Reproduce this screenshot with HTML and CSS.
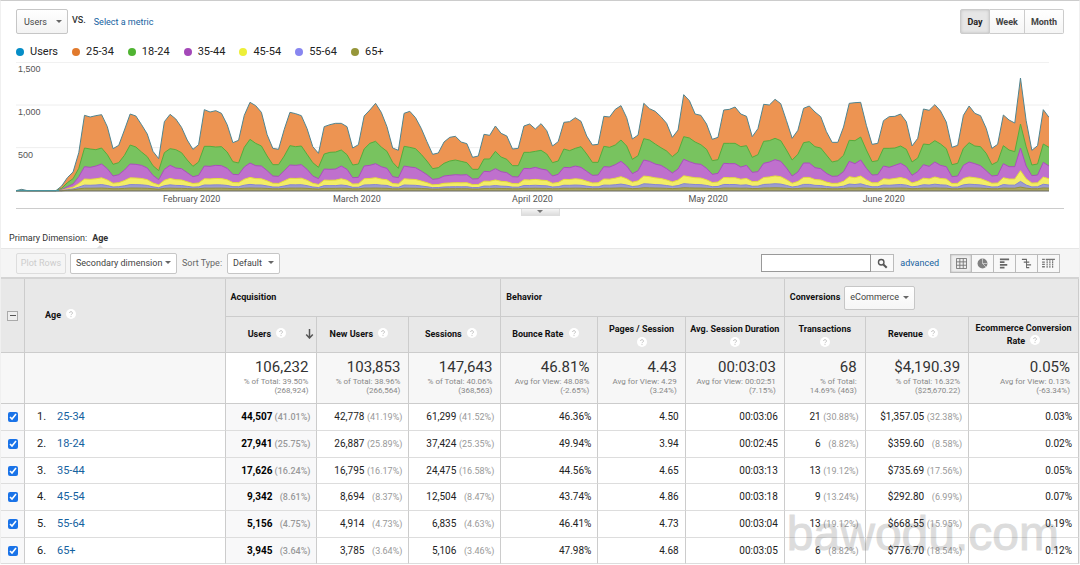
FILE: index.html
```html
<!DOCTYPE html>
<html lang="en">
<head>
<meta charset="utf-8">
<title>Age - Analytics</title>
<link rel="stylesheet" href="styles.css">
</head>
<body>
<svg class="defs" aria-hidden="true">
  <symbol id="help" viewBox="0 0 10 10"><circle cx="5" cy="5" r="5" fill="#fff"/><path d="M3.6 4a1.4 1.4 0 1 1 2.1 1.2Q5 5.600 5 6.200M5 7.200v.9" fill="none" stroke="#bbb" stroke-width=".9"/></symbol>
</svg>
<main class="report">
  <section class="graph">
    <div class="graph-bar">
      <span class="pick pick-metric"><select aria-label="Metric"><option>Users</option></select></span>
      <span class="versus">VS.</span>
      <a class="metric-link" href="#">Select a metric</a>
      <div class="periods">
        <button class="period active" type="button">Day</button><button class="period" type="button">Week</button><button class="period" type="button">Month</button>
      </div>
    </div>
    <ul class="legend">
      <li class="key users">Users</li><li class="key a25">25-34</li><li class="key a18">18-24</li><li class="key a35">35-44</li><li class="key a45">45-54</li><li class="key a55">55-64</li><li class="key a65">65+</li>
    </ul>
    <div class="chart">
      <svg class="plot" id="plot" viewBox="51 186 3093 390" preserveAspectRatio="none" role="img" aria-label="Users by age"></svg>
      <div class="scale"><span>1,500</span><span>1,000</span><span>500</span></div>
    </div>
    <div class="months"><span class="feb">February 2020</span><span class="mar">March 2020</span><span class="apr">April 2020</span><span class="may">May 2020</span><span class="jun">June 2020</span></div>
    <div class="divider"><button class="handle" type="button" aria-label="Toggle annotations"></button></div>
  </section>

  <div class="dimension"><span>Primary Dimension:</span><b>Age</b></div>

  <div class="toolbar">
    <button class="plot-rows" type="button" disabled>Plot Rows</button>
    <span class="pick pick-second"><select aria-label="Secondary dimension"><option>Secondary dimension</option></select></span>
    <label class="sort-label" for="sort">Sort Type:</label>
    <span class="pick pick-sort"><select id="sort"><option>Default</option></select></span>
    <form class="search">
      <input class="search-box" type="text" aria-label="Search">
      <button class="search-go" type="button" aria-label="Search"><svg viewBox="0 0 12 12"><circle cx="4.600" cy="4.600" r="3" fill="none" stroke="#555" stroke-width="1.500"/><path d="M7 7l3.600 3.600" stroke="#555" stroke-width="2.200"/></svg></button>
    </form>
    <a class="advanced" href="#">advanced</a>
    <div class="views">
      <button class="view active" type="button" aria-label="Data"><svg viewBox="0 0 12 12"><path d="M.5.5h11v11H.5zM.5 4.200h11M.5 7.900h11M4.200.5v11M7.900.5v11" fill="none" stroke="#777"/></svg></button><button class="view" type="button" aria-label="Percentage"><svg viewBox="0 0 12 12"><circle cx="6" cy="6" r="5.400" fill="#808080"/><path d="M6 .6V6h5.400M6 6l3.800 3.800" fill="none" stroke="#ddd" stroke-width=".8"/></svg></button><button class="view" type="button" aria-label="Performance"><svg viewBox="0 0 12 12"><path d="M1 1.500h10M1 4.500h5M1 7.500h8M1 10.500h5" stroke="#666" stroke-width="2"/></svg></button><button class="view" type="button" aria-label="Comparison"><svg viewBox="0 0 12 12"><path d="M1 1.500h5M3 4.500h3M6 7.500h5M6 10.500h3M6 4.500h3" stroke="#666" stroke-width="1.600"/><path d="M6 1v10" stroke="#666"/></svg></button><button class="view" type="button" aria-label="Pivot"><svg class="wide" viewBox="0 0 14 12"><path d="M0 1.500h3M4 1.500h10M0 4.500h3M0 7h3M0 9.500h3" stroke="#777" stroke-width="1.500"/><path d="M5.500 1v10M8.500 1v10M11.500 1v10" stroke="#777" stroke-width="1.300" stroke-dasharray="2 .5"/></svg></button>
    </div>
  </div>

  <div class="sheet">
  <table class="data">
    <colgroup><col class="c-check"><col class="c-name"><col class="c-users"><col class="c-users"><col class="c-users"><col class="c-bounce"><col class="c-pages"><col class="c-time"><col class="c-trans"><col class="c-rev"><col></colgroup>
    <thead>
      <tr class="groups">
        <th class="check" rowspan="2"><button class="minus" type="button" aria-label="Deselect all"></button></th>
        <th class="age" rowspan="2">Age <svg class="help"><use href="#help"/></svg></th>
        <th colspan="3">Acquisition</th>
        <th colspan="3">Behavior</th>
        <th colspan="3"><div class="conv"><label for="conv">Conversions</label><span class="pick pick-conv"><select id="conv"><option>eCommerce</option></select></span></div></th>
      </tr>
      <tr class="metrics">
        <th class="sorted">Users <svg class="help"><use href="#help"/></svg><svg class="arrow" viewBox="0 0 8 10"><path d="M4 0v9M.7 5.500L4 9l3.300-3.500" fill="none" stroke="#555" stroke-width="1.500"/></svg></th>
        <th>New Users <svg class="help"><use href="#help"/></svg></th>
        <th>Sessions <svg class="help"><use href="#help"/></svg></th>
        <th>Bounce Rate <svg class="help"><use href="#help"/></svg></th>
        <th class="tall">Pages / Session <svg class="help below"><use href="#help"/></svg></th>
        <th class="tall">Avg. Session Duration <svg class="help below"><use href="#help"/></svg></th>
        <th class="tall">Transactions <svg class="help below"><use href="#help"/></svg></th>
        <th>Revenue <svg class="help"><use href="#help"/></svg></th>
        <th class="tall">Ecommerce Conversion Rate <svg class="help"><use href="#help"/></svg></th>
      </tr>
    </thead>
    <tbody class="totals">
      <tr><td class="check"></td><td></td>
        <td class="lead"><strong>106,232</strong><small>% of Total: 39.50% (268,924)</small></td>
        <td><strong>103,853</strong><small>% of Total: 38.96% (266,564)</small></td>
        <td><strong>147,643</strong><small>% of Total: 40.06% (368,563)</small></td>
        <td><strong>46.81%</strong><small>Avg for View: 48.08% (-2.65%)</small></td>
        <td><strong>4.43</strong><small>Avg for View: 4.29 (3.24%)</small></td>
        <td><strong>00:03:03</strong><small>Avg for View: 00:02:51 (7.15%)</small></td>
        <td><strong>68</strong><small>% of Total:<br>14.69% (463)</small></td>
        <td><strong>$4,190.39</strong><small>% of Total: 16.32% ($25,670.22)</small></td>
        <td><strong>0.05%</strong><small>Avg for View: 0.13%<br>(-63.34%)</small></td></tr>
    </tbody>
    <tbody class="rows">
      <tr><td class="check"><input type="checkbox" checked aria-label="25-34"></td><td class="name"><span>1.</span><a href="#">25-34</a></td><td class="lead">44,507<i>(41.01%)</i></td><td>42,778<i>(41.19%)</i></td><td>61,299<i>(41.52%)</i></td><td>46.36%</td><td>4.50</td><td>00:03:06</td><td>21<i>(30.88%)</i></td><td>$1,357.05<i>(32.38%)</i></td><td>0.03%</td></tr>
      <tr><td class="check"><input type="checkbox" checked aria-label="18-24"></td><td class="name"><span>2.</span><a href="#">18-24</a></td><td class="lead">27,941<i>(25.75%)</i></td><td>26,887<i>(25.89%)</i></td><td>37,424<i>(25.35%)</i></td><td>49.94%</td><td>3.94</td><td>00:02:45</td><td>6<i>(8.82%)</i></td><td>$359.60<i>(8.58%)</i></td><td>0.02%</td></tr>
      <tr><td class="check"><input type="checkbox" checked aria-label="35-44"></td><td class="name"><span>3.</span><a href="#">35-44</a></td><td class="lead">17,626<i>(16.24%)</i></td><td>16,795<i>(16.17%)</i></td><td>24,475<i>(16.58%)</i></td><td>44.56%</td><td>4.65</td><td>00:03:13</td><td>13<i>(19.12%)</i></td><td>$735.69<i>(17.56%)</i></td><td>0.05%</td></tr>
      <tr><td class="check"><input type="checkbox" checked aria-label="45-54"></td><td class="name"><span>4.</span><a href="#">45-54</a></td><td class="lead">9,342<i>(8.61%)</i></td><td>8,694<i>(8.37%)</i></td><td>12,504<i>(8.47%)</i></td><td>43.74%</td><td>4.86</td><td>00:03:18</td><td>9<i>(13.24%)</i></td><td>$292.80<i>(6.99%)</i></td><td>0.07%</td></tr>
      <tr><td class="check"><input type="checkbox" checked aria-label="55-64"></td><td class="name"><span>5.</span><a href="#">55-64</a></td><td class="lead">5,156<i>(4.75%)</i></td><td>4,914<i>(4.73%)</i></td><td>6,835<i>(4.63%)</i></td><td>46.41%</td><td>4.73</td><td>00:03:04</td><td>13<i>(19.12%)</i></td><td>$668.55<i>(15.95%)</i></td><td>0.19%</td></tr>
      <tr><td class="check"><input type="checkbox" checked aria-label="65+"></td><td class="name"><span>6.</span><a href="#">65+</a></td><td class="lead">3,945<i>(3.64%)</i></td><td>3,785<i>(3.64%)</i></td><td>5,106<i>(3.46%)</i></td><td>47.98%</td><td>4.68</td><td>00:03:05</td><td>6<i>(8.82%)</i></td><td>$776.70<i>(18.54%)</i></td><td>0.12%</td></tr>
    </tbody>
  </table>
  <div class="watermark">bawodu.com</div>
  </div>
</main>
<script src="chart.js"></script>
</body>
</html>
```
FILE: styles.css
```css
* { box-sizing: border-box; }
body { margin: 0; background: #fff; color: #333; font: 11px/14px Roboto, "Liberation Sans", sans-serif; }
button, input, select { font: inherit; color: inherit; margin: 0; }
button { padding: 0; cursor: pointer; }
a { color: #15629f; text-decoration: none; }
.defs { display: none; }
.report { border: 1px solid #f0f0f0; border-top-color: #ccc; border-bottom: 0; }

.graph { padding: 8px 15px 0; }
.graph-bar { display: flex; align-items: center; height: 25px; }
.versus { margin-left: 4px; font-size: 9px; font-weight: 500; align-self: flex-start; line-height: 22px; }
.metric-link { margin-left: 8px; font-size: 9px; }

.pick { position: relative; display: inline-flex; }
.pick::after { content: ""; position: absolute; right: 6px; top: 50%; margin-top: -2px; border: 3px solid transparent; border-top-color: #666; border-bottom: 0; pointer-events: none; }
.pick select { appearance: none; width: 100%; height: 21px; padding: 0 5px; border: 1px solid #c6c6c6; border-radius: 2px; background: #fff; font-size: 9px; color: #444; }
.pick-metric { width: 52px; }
.pick-metric select { height: 25px; padding: 0 7px; background: linear-gradient(#fff, #f3f3f3); }

.periods { display: flex; margin-left: auto; }
.period { height: 25px; padding: 0 6px; border: 1px solid #ccc; border-left-width: 0; background: linear-gradient(#fff, #f5f5f5); font-size: 9px; font-weight: 700; color: #444; }
.period:first-child { border-left-width: 1px; border-radius: 2px 0 0 2px; }
.period:last-child { border-radius: 0 2px 2px 0; }
.period.active { background: #e6e6e6; color: #222; box-shadow: inset 0 0 3px #bbb; }

.legend { display: flex; gap: 14px; margin: 11px 0 3px; padding: 0; list-style: none; color: #222; }
.key { display: flex; align-items: center; gap: 6px; }
.key::before { content: ""; width: 8px; height: 8px; border-radius: 50%; background: var(--dot); }
.users { --dot: #058dc7; }
.a25 { --dot: #e17a2d; }
.a18 { --dot: #50b432; }
.a35 { --dot: #a449b8; }
.a45 { --dot: #edef39; }
.a55 { --dot: #8886f0; }
.a65 { --dot: #96963a; }

.chart { position: relative; margin-right: 15px; }
.plot { display: block; width: 100%; height: 130px; }
.scale { position: absolute; left: 2px; top: 0; font: 9px/14px "Liberation Sans", sans-serif; color: #555; display: grid; gap: 29px; }
.months { position: relative; height: 16px; margin-right: 15px; font-size: 9px; line-height: 15px; color: #555; }
.months span { position: absolute; transform: translateX(-50%); white-space: nowrap; }
.feb { left: 17%; }
.mar { left: 33%; }
.apr { left: 50%; }
.may { left: 67%; }
.jun { left: 84%; }
.divider { display: flex; justify-content: center; align-items: flex-start; height: 19px; border-top: 1px solid #ccc; }
.handle { width: 39px; height: 7px; border: 1px solid #ddd; border-top: 0; background: linear-gradient(#f5f5f5, #ddd); display: flex; justify-content: center; }
.handle::after { content: ""; margin-top: 1px; border: 3px solid transparent; border-top-color: #777; border-bottom: 0; }

.dimension { display: flex; gap: 5px; padding: 4px 8px 3px; font-size: 9px; }
.dimension b { position: relative; }
.dimension b::after { content: ""; position: absolute; left: 50%; bottom: -4px; margin-left: -4px; border: 4px solid transparent; border-bottom-color: #e2e2e2; border-top: 0; }
.toolbar { display: flex; align-items: center; height: 29px; padding: 0 19px 0 15px; border-top: 1px solid #e6e6e6; background: #f5f5f5; }
.plot-rows { height: 21px; width: 50px; margin-right: 4px; border: 1px solid #ddd; border-radius: 2px; background: #f5f5f5; color: #ccc; font-size: 9px; }
.pick-second { width: 107px; }
.sort-label { margin: 0 5px; font-size: 9px; color: #666; }
.pick-sort { width: 53px; }
.search { display: flex; margin: 0 6px 0 auto; }
.search-box { width: 110px; height: 18px; border: 1px solid #999; background: #fff; }
.search-go { width: 23px; height: 18px; border: 1px solid #bbb; border-left: 0; background: #fafafa; display: grid; place-items: center; }
.search-go svg { width: 11px; height: 11px; }
.advanced { margin-right: 11px; font-size: 9px; }
.views { display: flex; }
.view { width: 22px; height: 19px; border: 1px solid #bbb; border-left-width: 0; background: #f8f8f8; display: grid; place-items: center; }
.view:first-child { border-left-width: 1px; }
.view.active { background: #eee; box-shadow: inset 0 0 2px #aaa; }
.view svg { width: 11px; height: 11px; }
.view .wide { width: 13px; }

.sheet { position: relative; }
.data { width: 100%; table-layout: fixed; border-collapse: separate; border-spacing: 0; border-top: 2px solid #d4d4d4; }
.c-check { width: 24px; }
.c-name { width: 18.6%; }
.c-users { width: 8.53%; }
.c-bounce { width: 9%; }
.c-pages { width: 8.1%; }
.c-time { width: 9.2%; }
.c-trans { width: 7.5%; }
.c-rev { width: 9.6%; }
.data th, .data td { padding: 0; border-right: 1px solid #ccc; border-bottom: 1px solid #ccc; }
.data th { background: #e8e8e8; color: #111; font-size: 9px; line-height: 13px; font-weight: 700; }
.groups th { height: 38px; padding-left: 5px; text-align: left; }
.data .metrics th { position: relative; height: 36px; padding-right: 8px; }
.data .metrics .tall { padding-right: 0; }
.groups .check { padding: 0; text-align: center; }
.groups .age { padding-left: 20px; }
.conv { display: flex; align-items: center; gap: 4px; }
.pick-conv { width: 71px; }
.pick-conv select { height: 24px; font-weight: 400; background: linear-gradient(#fff, #f6f6f6); }
.minus { width: 11px; height: 10px; border: 1px solid #aaa; background: #eee; display: inline-grid; place-items: center; vertical-align: middle; }
.minus::after { content: ""; width: 6px; height: 1px; background: #555; }
.help { width: 10px; height: 10px; margin-left: 3px; vertical-align: -1px; }
.below { display: block; margin: 1px auto 0; }
.arrow { position: absolute; right: 2px; top: 12px; width: 9px; height: 10px; }

.data td { text-align: right; padding-right: 7px; }
.data .check { text-align: center; padding: 0; }
.data .totals td { height: 51px; padding: 4px 8px 0 0; background: #f7f7f7; vertical-align: top; }
.data .totals .lead { background: #fff; }
.totals strong { display: block; font-size: 15px; line-height: 20px; font-weight: 400; color: #333; }
.totals small { display: block; font-size: 8px; line-height: 9px; color: #888; }
.data .rows td { height: 27px; padding-right: 6px; color: #222; font-size: 10px; border-bottom-color: #ddd; }
.data .rows tr:nth-child(3n) td { height: 26px; }
.rows .check, .rows .lead { background: #f8f8f9; }
.data .rows .check { padding: 0; }
.data .rows .lead { font-weight: 700; color: #000; }
.rows i { display: inline-block; width: 38px; font-style: normal; font-weight: 400; font-size: 9px; color: #999; }
.rows .lead i { font-weight: 500; }
.data .rows .name { text-align: left; padding-left: 12px; font-size: 11px; }
.name span { display: inline-block; width: 20px; }
.rows input { width: 10px; height: 10px; vertical-align: middle; accent-color: #1a73e8; }
.watermark { position: absolute; right: 20px; bottom: 6px; font: 48px/48px "Liberation Sans", sans-serif; color: #555; -webkit-text-stroke: 1px #555; opacity: .2; pointer-events: none; }
```
FILE: chart.js
```js
// One entry per day, as vertical positions on the plot; the baseline is BASE.
const BASE = 573;
const LEFT = 51;
const WIDTH = 3093;
const flat = [572, 572, 572, 572, 572, 572, 572, 572];

const users = [572, 568, 572, 572, 572, 572, 572, 572,
  558, 533, 516, 458, 346, 351, 347, 344, 380, 446, 436, 390, 342, 348, 374, 402, 454, 476, 365, 343, 357, 382, 420, 448, 434,
  329, 336, 332, 340, 374, 428, 421, 346, 307, 317, 337, 404, 445, 448, 388, 337, 341, 347, 386, 440, 460, 380, 374, 370, 370, 380, 444, 434,
  348, 330, 310, 337, 380, 444, 451, 340, 334, 353, 385, 425, 463, 459, 426, 412, 409, 426, 431, 472, 468, 403, 406, 378, 400, 408, 447, 445,
  378, 372, 387, 371, 392, 438, 425, 367, 365, 353, 364, 408, 435, 433, 349, 351, 328, 317, 353, 417, 405, 310, 326, 334, 350, 370, 412, 390,
  284, 302, 342, 346, 372, 418, 412, 330, 328, 321, 342, 349, 410, 386, 313, 315, 298, 311, 362, 415, 391, 325, 318, 336, 350, 395, 427, 427,
  381, 310, 308, 307, 376, 433, 430, 362, 350, 349, 342, 365, 438, 415, 327, 331, 314, 333, 366, 442, 436, 346, 318, 340, 347, 385, 445, 433,
  345, 360, 369, 234, 362, 451, 437, 329, 352];

const green = [...flat,
  565, 548, 536, 505, 444, 447, 449, 444, 464, 493, 488, 466, 435, 441, 456, 470, 497, 512, 458, 446, 449, 458, 480, 499, 486,
  439, 439, 441, 440, 456, 485, 489, 442, 418, 430, 438, 468, 494, 494, 468, 437, 440, 438, 463, 488, 502, 462, 457, 456, 450, 464, 495, 492,
  447, 430, 424, 441, 454, 487, 505, 439, 442, 446, 463, 483, 506, 503, 490, 483, 480, 484, 488, 508, 508, 477, 477, 454, 471, 478, 497, 497,
  457, 457, 454, 451, 462, 488, 483, 447, 452, 445, 440, 462, 487, 487, 439, 442, 435, 420, 438, 478, 467, 416, 420, 432, 443, 453, 470, 456,
  410, 414, 426, 434, 448, 482, 479, 430, 430, 430, 440, 437, 472, 464, 424, 422, 415, 422, 450, 480, 463, 428, 425, 440, 444, 465, 486, 482,
  466, 421, 422, 411, 450, 485, 482, 445, 445, 444, 438, 448, 486, 474, 432, 434, 422, 432, 446, 494, 490, 445, 428, 438, 440, 460, 494, 485,
  437, 450, 455, 372, 440, 495, 492, 432, 442];

const purple = [...flat,
  569, 560, 552, 530, 500, 502, 498, 492, 506, 528, 524, 510, 492, 493, 496, 504, 526, 539, 508, 496, 504, 506, 518, 530, 526,
  498, 499, 496, 497, 505, 523, 524, 501, 489, 497, 498, 512, 528, 529, 512, 495, 496, 494, 508, 528, 536, 507, 508, 507, 498, 508, 533, 532,
  498, 496, 491, 500, 505, 530, 533, 498, 501, 503, 513, 524, 538, 536, 528, 526, 524, 525, 524, 537, 536, 514, 515, 506, 515, 518, 530, 531,
  505, 506, 502, 507, 510, 528, 523, 502, 503, 498, 502, 514, 526, 525, 500, 501, 494, 484, 498, 521, 512, 480, 484, 492, 496, 506, 519, 507,
  478, 485, 491, 493, 505, 523, 520, 490, 491, 491, 501, 496, 517, 515, 490, 486, 479, 484, 504, 528, 516, 489, 489, 503, 506, 520, 529, 528,
  515, 484, 491, 480, 505, 525, 524, 498, 502, 496, 490, 500, 526, 515, 494, 499, 486, 496, 500, 530, 528, 496, 486, 491, 497, 512, 528, 526,
  491, 500, 500, 444, 498, 527, 525, 487, 498];

// The three smallest groups follow the 35-44 curve at a fixed share.
const share = (rate, base) => purple.map((y, i) => i < 8 ? y : BASE - (BASE - y) * rate - Math.min(base, (BASE - y) / 10));

const series = [
  { data: users, fill: "#ed9452", line: "#4f8591" },
  { data: green, fill: "#78c35f", line: "#56ac3c" },
  { data: purple, fill: "#bf70cd", line: "#a94fbc" },
  { data: share(0.45, 3), fill: "#f3ed66", line: "#e3dc3c" },
  { data: share(0.2, 3), fill: "#9c9dce", line: "#8583d4" },
  { data: share(0.06, 4), fill: "#aaa65c", line: "#94913c" }
];

const plot = document.getElementById("plot");
const draw = (tag, attrs) => {
  const node = document.createElementNS("http://www.w3.org/2000/svg", tag);
  for (const name in attrs) node.setAttribute(name, attrs[name]);
  node.setAttribute("vector-effect", "non-scaling-stroke");
  plot.append(node);
};

[187, 315, 443].forEach(y => draw("path", { d: `M51 ${y}H3144`, stroke: "#eee" }));
series.forEach(({ data, fill, line }) => {
  const step = WIDTH / (data.length - 1);
  const points = data.map((y, i) => `${(LEFT + i * step).toFixed(1)},${y.toFixed(1)}`).join(" ");
  draw("polygon", { points: `51,${BASE} ${points} 3144,${BASE}`, fill });
  draw("polyline", { points, fill: "none", stroke: line, "stroke-width": 1 });
});
draw("path", { d: `M51 ${BASE}H3144`, stroke: "#666" });
draw("path", { d: "M51 572H180", stroke: "#3f98a8" });
```
